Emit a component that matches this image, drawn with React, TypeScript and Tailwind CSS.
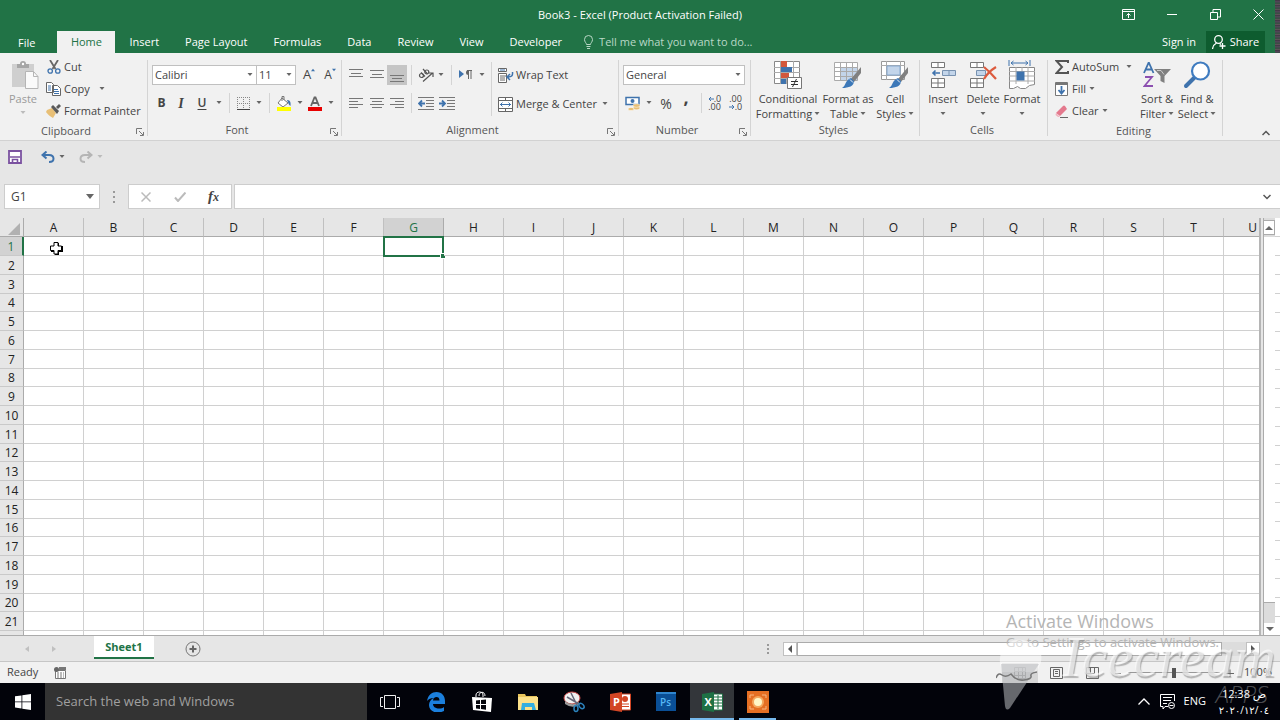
import type { ReactNode } from "react";

const COLUMNS = "ABCDEFGHIJKLMNOPQRSTU".split("");
const ROWS = Array.from({ length: 21 }, (_, i) => i + 1);
const TABS = ["Insert", "Page Layout", "Formulas", "Data", "Review", "View", "Developer"];

function Caret({ className = "text-[#666]" }: { className?: string }) {
  return (
    <svg viewBox="0 0 6 4" className={`h-1 w-1.5 shrink-0 ${className}`} aria-hidden="true">
      <path d="M.5 0h5L3 3z" fill="currentColor" />
    </svg>
  );
}

function Btn({ label, className, children }: { label: string; className: string; children: ReactNode }) {
  return (
    <button type="button" aria-label={label} className={`flex h-5 shrink-0 items-center justify-center ${className}`}>
      {children}
    </button>
  );
}

function Sep({ className = "h-5" }: { className?: string }) {
  return <span className={`w-px shrink-0 bg-[#d4d4d4] ${className}`} />;
}

function Group({ name, width, launcher, children }: { name: string; width: string; launcher?: boolean; children: ReactNode }) {
  return (
    <section aria-label={name} className={`relative flex shrink-0 flex-col ${width}`}>
      <div className="flex h-[66px]">{children}</div>
      <div className={`flex h-[21px] items-center justify-center text-[11px] text-[#555] ${launcher ? "pr-4" : "pr-1"}`}>{name}</div>
      {launcher && (
        <button type="button" aria-label={`${name} settings`} className="absolute right-1 bottom-1">
          <svg viewBox="0 0 8 8" className="h-2 w-2" fill="none" stroke="#777">
            <path d="M.5 6V.5H6M3 3l4 4M7.500 4v3.500H4" />
          </svg>
        </button>
      )}
      <span className="absolute top-1 right-0 bottom-1 w-px bg-[#d4d4d4]" />
    </section>
  );
}

function BigButton({ lines, caret, width, icon }: { lines: string[]; caret?: boolean; width: string; icon: ReactNode }) {
  return (
    <button type="button" className={`flex shrink-0 flex-col items-center pt-[3px] leading-[15px] ${width}`}>
      <span className="flex h-[32px] items-center">{icon}</span>
      <span className="whitespace-nowrap">{lines[0]}</span>
      <span className="flex h-[15px] items-center gap-0.5 whitespace-nowrap">
        {lines[1]}
        {caret && <Caret />}
      </span>
    </button>
  );
}

function SmallRow({ icon, text, children }: { icon: ReactNode; text: string; children?: ReactNode }) {
  return (
    <button type="button" className="flex h-[22px] items-center gap-[3px] whitespace-nowrap">
      <span className="flex w-[15px] justify-center">{icon}</span>
      {text}
      {children}
    </button>
  );
}

function Lines({ d }: { d: string }) {
  return (
    <svg viewBox="0 0 14 14" className="h-3.5 w-3.5" stroke="#777" fill="none">
      <path d={d} />
    </svg>
  );
}

function Combo({ label, value, width }: { label: string; value: string; width: string }) {
  return (
    <span className={`relative flex h-5 ${width}`}>
      <select aria-label={label} className="h-full w-full appearance-none border border-[#c0c0c0] bg-white pl-0.5 text-[11px] text-[#444] outline-none">
        <option>{value}</option>
      </select>
      <span className="pointer-events-none absolute top-2 right-1">
        <Caret />
      </span>
    </span>
  );
}

function Brush() {
  return (
    <>
      <path d="M27 6v6l-7 9-3-3z" fill="#808080" />
      <path d="M17 17l3 3c0 5-5 7-12 7 4-2 3-8 9-10z" fill="#3c78b8" />
      <path d="M16 18.500l3 3" stroke="#f1f1f1" />
    </>
  );
}

function Ribbon() {
  return (
    <div className="flex h-[88px] border-b border-[#d2d2d2] bg-[#f1f1f1] pt-[3px] text-[11px] text-[#444]">
      <Group name="Clipboard" width="w-[148px]" launcher>
        <button type="button" className="flex w-[46px] flex-col items-center pt-[3px] leading-[15px] text-[#9a9a9a]">
          <svg viewBox="0 0 28 30" className="ml-1 h-[32px] w-[28px]">
            <path d="M1 4h22v23H1z" fill="#cfcfcf" />
            <path d="M6 8V4h3a3 3 0 0 1 6 0h3v4z" fill="#a6a6a6" />
            <circle cx="12" cy="4" r="1.200" fill="#fff" />
            <path d="M14.500 11.500h8l4.500 5v12H14.500z" fill="#fafafa" stroke="#b5b5b5" />
            <path d="M22.500 11.500v5H27" fill="none" stroke="#b5b5b5" />
          </svg>
          Paste
          <span className="flex h-[14px] items-center">
            <Caret className="text-[#bbb]" />
          </span>
        </button>
        <div className="flex flex-col">
          <SmallRow
            text="Cut"
            icon={
              <svg viewBox="0 0 14 14" className="h-3.5 w-3.5" fill="none">
                <path d="M3 0l5.500 9M11 0L5.500 9" stroke="#666" strokeWidth="1.800" />
                <circle cx="3.200" cy="11" r="2.200" stroke="#3f73ad" strokeWidth="1.300" />
                <circle cx="10.800" cy="11" r="2.200" stroke="#3f73ad" strokeWidth="1.300" />
              </svg>
            }
          />
          <SmallRow
            text="Copy"
            icon={
              <svg viewBox="0 0 15 14" className="h-3.5 w-[15px]" fill="#fff" stroke="#666">
                <path d="M.5.5h5l2 2v8h-7zM6.500 3.500h5l3 3v7h-8z" />
                <path d="M2 4h3M2 6h3M2 8h3M8 7.500h4M8 9.500h5M8 11.500h5" stroke="#3f73ad" />
              </svg>
            }
          >
            <span className="pl-1.5">
              <Caret />
            </span>
          </SmallRow>
          <SmallRow
            text="Format Painter"
            icon={
              <svg viewBox="0 0 15 14" className="h-3.5 w-[15px]">
                <path d="M1 6l5-2 4 5-3 5C5 13 2 11 0 8z" fill="#e8bf76" />
                <path d="M5 3l2-2 6 6-2 3z" fill="#595959" />
                <path d="M10 3l3-3 2 2-3 3z" fill="#595959" />
              </svg>
            }
          />
        </div>
      </Group>

      <Group name="Font" width="w-[194px]" launcher>
        <div className="flex flex-col pt-[9px] pl-1">
          <div className="flex items-center">
            <Combo label="Font name" value="Calibri" width="w-[105px] -mr-px" />
            <Combo label="Font size" value="11" width="w-[40px]" />
            <Btn label="Increase font size" className="ml-0.5 w-[22px] text-[13px]">
              A
              <svg viewBox="0 0 6 4" className="mb-2.5 h-1 w-1"><path d="M0 4h6L3 0z" fill="#3f73ad" /></svg>
            </Btn>
            <Btn label="Decrease font size" className="w-5 text-[12px]">
              A
              <svg viewBox="0 0 6 4" className="mb-2.5 h-1 w-1"><path d="M0 0h6L3 4z" fill="#3f73ad" /></svg>
            </Btn>
          </div>
          <div className="flex items-center pt-2">
            <Btn label="Bold" className="w-[19px] text-[12px] font-bold">B</Btn>
            <Btn label="Italic" className="w-5 font-['Liberation_Serif',serif] text-[14px] font-bold italic">I</Btn>
            <Btn label="Underline" className="w-[22px] text-[12px] font-semibold underline underline-offset-2">U</Btn>
            <Btn label="Underline styles" className="w-3"><Caret /></Btn>
            <span className="w-1" />
            <Sep />
            <Btn label="Borders" className="ml-[3px] w-[20px]">
              <svg viewBox="0 0 13 13" className="h-[13px] w-[13px]" stroke="#888" fill="none">
                <path d="M.5 0v12M6.500 0v12M12.500 0v12M0 .5h13M0 6.500h13" strokeDasharray="1 1" />
                <path d="M0 12.500h13" stroke="#444" />
              </svg>
            </Btn>
            <Btn label="Border styles" className="w-3"><Caret /></Btn>
            <span className="w-1" />
            <Sep />
            <Btn label="Fill color" className="ml-1 w-5">
              <svg viewBox="0 0 16 15" className="h-[15px] w-4">
                <path d="M6 2l6 5-5 4-5-4z" fill="#fff" stroke="#777" />
                <path d="M6 5V.5h2V4" fill="none" stroke="#777" />
                <path d="M11 4c3 0 4 2 3.500 6-2-1-2-3-3.500-6z" fill="#3f73ad" />
                <path d="M1 11h14v4H1z" fill="#ffff00" />
              </svg>
            </Btn>
            <Btn label="Fill colors" className="w-[11px]"><Caret /></Btn>
            <Btn label="Font color" className="w-5">
              <svg viewBox="0 0 16 15" className="h-[15px] w-4">
                <path d="M4 10L7.500 1.500h1L12 10M5.500 7h5" fill="none" stroke="#666" strokeWidth="1.800" />
                <path d="M1 11h14v4H1z" fill="#e80000" />
              </svg>
            </Btn>
            <Btn label="Font colors" className="w-3"><Caret /></Btn>
          </div>
        </div>
      </Group>

      <Group name="Alignment" width="w-[277px]" launcher>
        <div className="flex flex-col gap-2 pt-[9px] pl-1">
          <div className="flex items-center">
            <Btn label="Top align" className="w-5"><Lines d="M0 1.500h14M2 5.500h10M0 8.500h14" /></Btn>
            <Btn label="Middle align" className="w-[21px]"><Lines d="M0 2.500h14M2 6.500h10M0 9.500h14" /></Btn>
            <Btn label="Bottom align" className="w-5 bg-[#c5c5c5]"><Lines d="M0 7.500h14M2 10.500h10M0 13.500h14" /></Btn>
            <span className="w-1" />
            <Sep />
            <Btn label="Orientation" className="ml-1 w-5">
              <svg viewBox="0 0 16 15" className="h-[15px] w-4" fill="none" stroke="#555" strokeWidth="1.200">
                <path d="M5 13.500L14.500 5M11 5h4v4" />
                <circle cx="3.500" cy="7.500" r="2" />
                <path d="M3 4.500l4 4M5 1l4.500 5" />
                <circle cx="8.800" cy="4" r="2" />
              </svg>
            </Btn>
            <Btn label="Orientation options" className="w-[9px]"><Caret /></Btn>
            <span className="w-1.5" />
            <Sep />
            <Btn label="Text direction" className="ml-1 w-5">
              <svg viewBox="0 0 14 10" className="h-2.5 w-3.5">
                <path d="M0 0l5 4-5 4z" fill="#3f73ad" />
                <path d="M12 0v9M9.500 0v9M13 .5H8" stroke="#666" fill="none" />
                <path d="M9.500 0a2.500 2.500 0 0 0 0 5z" fill="#666" />
              </svg>
            </Btn>
            <Btn label="Direction options" className="w-[11px]"><Caret /></Btn>
          </div>
          <div className="flex items-center">
            <Btn label="Align left" className="w-5"><Lines d="M0 2.500h14M0 5.500h9M0 8.500h14M0 11.500h9" /></Btn>
            <Btn label="Center" className="w-[21px]"><Lines d="M0 2.500h14M2 5.500h10M0 8.500h14M2 11.500h10" /></Btn>
            <Btn label="Align right" className="w-5"><Lines d="M0 2.500h14M5 5.500h9M0 8.500h14M5 11.500h9" /></Btn>
            <span className="w-1" />
            <Sep />
            <Btn label="Decrease indent" className="ml-1 w-5">
              <svg viewBox="0 0 16 13" className="h-[13px] w-4" stroke="#777" fill="none">
                <path d="M0 .5h16M8 3.500h8M8 6.500h8M8 9.500h8M0 12.500h16" />
                <path d="M7 6.500H1M4 3.500l-3 3 3 3" stroke="#3f73ad" strokeWidth="1.800" />
              </svg>
            </Btn>
            <Btn label="Increase indent" className="ml-px w-5">
              <svg viewBox="0 0 16 13" className="h-[13px] w-4" stroke="#777" fill="none">
                <path d="M0 .5h16M8 3.500h8M8 6.500h8M8 9.500h8M0 12.500h16" />
                <path d="M0 6.500h6M3 3.500l3 3-3 3" stroke="#3f73ad" strokeWidth="1.800" />
              </svg>
            </Btn>
          </div>
        </div>
        <div className="flex pt-1.5 pl-1">
          <Sep className="h-[54px]" />
          <div className="flex flex-col gap-[7px] pt-0.5 pl-1.5">
            <SmallRow
              text="Wrap Text"
              icon={
                <svg viewBox="0 0 16 15" className="h-[15px] w-4 shrink-0" fill="none" stroke="#666">
                  <path d="M.5.5h8v3h-8zM.5 5.500h8v9h-8z" fill="#fff" />
                  <path d="M2 2h5" stroke="#3f73ad" />
                  <path d="M2 8h7M2 10h5M2 12h5" />
                  <path d="M14.500 4c.5 4-1 5-5 5M12 6L9 9l3 3" stroke="#3f73ad" strokeWidth="1.500" />
                </svg>
              }
            />
            <SmallRow
              text="Merge & Center"
              icon={
                <svg viewBox="0 0 15 15" className="h-[15px] w-[15px]" fill="#fff" stroke="#666">
                  <path d="M.5.5h14v14H.5zM.5 3.500h14M.5 11.500h14M7.500.5v3M7.500 11.500v3" />
                  <path d="M2 7.500h11M4.500 5.500l-2 2 2 2M10.500 5.500l2 2-2 2" fill="none" stroke="#3f73ad" />
                </svg>
              }
            >
              <span className="pl-0.5"><Caret /></span>
            </SmallRow>
          </div>
        </div>
      </Group>

      <Group name="Number" width="w-[132px]" launcher>
        <div className="flex flex-col gap-2 pt-[9px] pl-1">
          <Combo label="Number format" value="General" width="w-[122px]" />
          <div className="flex items-center">
            <Btn label="Accounting format" className="w-5">
              <svg viewBox="0 0 16 15" className="h-[15px] w-4">
                <path d="M1 1.500h13v7H1z" fill="#fff" stroke="#3f73ad" strokeWidth="1.500" />
                <circle cx="7.500" cy="5" r="2" fill="#3f73ad" />
                <g fill="#e8bf76" stroke="#fff" strokeWidth=".5">
                  <ellipse cx="11.500" cy="12" rx="3.500" ry="1.800" />
                  <ellipse cx="11.500" cy="9.500" rx="3.500" ry="1.800" />
                  <ellipse cx="6" cy="13" rx="3" ry="1.600" />
                </g>
              </svg>
            </Btn>
            <Btn label="Accounting options" className="w-3"><Caret /></Btn>
            <Btn label="Percent style" className="w-[22px] text-[14px]">%</Btn>
            <Btn label="Comma style" className="w-[18px] pb-3 text-[18px] font-bold">,</Btn>
            <span className="w-1.5" />
            <Sep />
            <Btn label="Increase decimal" className="ml-0.5 w-[21px] flex-col text-[9px] leading-[8px]">
              <span className="flex items-center"><svg viewBox="0 0 6 6" className="h-1.5 w-1.5" fill="none" stroke="#3f73ad"><path d="M6 3H1M3 1L1 3l2 2" /></svg>.0</span>
              <span>.00</span>
            </Btn>
            <Btn label="Decrease decimal" className="w-[21px] flex-col text-[9px] leading-[8px]">
              <span>.00</span>
              <span className="flex items-center"><svg viewBox="0 0 6 6" className="h-1.5 w-1.5" fill="none" stroke="#3f73ad"><path d="M0 3h5M3 1l2 2-2 2" /></svg>.0</span>
            </Btn>
          </div>
        </div>
      </Group>

      <Group name="Styles" width="w-[169px]">
        <div className="flex pl-1.5">
          <BigButton
            lines={["Conditional", "Formatting"]}
            caret
            width="w-[62px]"
            icon={
              <svg viewBox="0 0 30 30" className="h-[30px] w-[30px]">
                <path d="M1.500 1.500h25v22h-25z" fill="#fff" stroke="#888" />
                <path d="M7.500 1v23M13.500 1v23M20.500 1v23M1 7.500h26M1 12.500h26M1 18.500h26" stroke="#aaa" />
                <path d="M8 1h6v6H8zM8 13h8v5H8z" fill="#d2583c" />
                <path d="M8 7h11v5H8zM8 19h5v5H8z" fill="#3f73ad" />
                <path d="M14.500 17.500h14v11h-14z" fill="#fff" stroke="#777" />
                <path d="M18 21.500h7M18 24.500h7M23.500 19l-4 8" stroke="#333" />
              </svg>
            }
          />
          <BigButton
            lines={["Format as", "Table"]}
            caret
            width="w-[58px]"
            icon={
              <svg viewBox="0 0 28 28" className="h-7 w-7">
                <path d="M.5 1.500h23v18H.5z" fill="#fff" />
                <path d="M7 6h16v14H7z" fill="#c3d5ea" />
                <path d="M.5 1.500h23v18H.5zM6.500 1v19M12.500 1v19M18.500 1v19M0 6.500h24M0 10.500h24M0 15.500h24" fill="none" stroke="#aaa" />
                <Brush />
              </svg>
            }
          />
          <BigButton
            lines={["Cell", "Styles"]}
            caret
            width="w-[36px]"
            icon={
              <svg viewBox="0 0 28 28" className="h-7 w-7">
                <path d="M.5.5h23v18H.5z" fill="#fff" stroke="#999" />
                <path d="M5.500 0v19M19.500 0v19M0 4.500h24M0 14.500h24" stroke="#aaa" />
                <path d="M6 5h13v9H6z" fill="#c3d5ea" stroke="#87a9cf" />
                <Brush />
              </svg>
            }
          />
        </div>
      </Group>

      <Group name="Cells" width="w-[128px]">
        <div className="flex pl-[3px]">
          <BigButton
            lines={["Insert", ""]}
            caret
            width="w-10"
            icon={
              <svg viewBox="0 0 26 28" className="h-7 w-[26px]" fill="#fff" stroke="#777">
                <path d="M1.500 1.500h13v5h-13zM8 1.500v5M1.500 17.500h13v9h-13zM8 17.500v9M1.500 22h13" />
                <path d="M12.500 9.500h13v5h-13zM19 9.500v5" fill="#c3d5ea" stroke="#7892b0" />
                <path d="M10 12H3M5.500 9.500L3 12l2.500 2.500" fill="none" stroke="#3f73ad" strokeWidth="1.600" />
              </svg>
            }
          />
          <BigButton
            lines={["Delete", ""]}
            caret
            width="w-10"
            icon={
              <svg viewBox="0 0 28 28" className="h-7 w-7" fill="#fff" stroke="#777">
                <path d="M1.500 1.500h13v5h-13zM8 1.500v5M1.500 17.500h13v9h-13zM8 17.500v9M1.500 22h13" />
                <path d="M7.500 9.500h9v5h-9z" fill="#c3d5ea" stroke="#7892b0" />
                <path d="M15 6q6 5 12 12M27 6q-8 5-12 12" fill="none" stroke="#dc5b3e" strokeWidth="2.200" />
              </svg>
            }
          />
          <BigButton
            lines={["Format", ""]}
            caret
            width="w-[38px]"
            icon={
              <svg viewBox="0 0 28 30" className="h-[30px] w-7" fill="none" stroke="#888">
                <path d="M1.500 7.500h25v17l-5 1-4 3h-5l-3-2-4 2h-4z" fill="#fff" />
                <path d="M8 7v17M20 7v17M14 7v4M1 11.500h26M1 16h26M1 21h26" stroke="#aaa" />
                <path d="M8.500 11.500h8v9h-8z" fill="#3f73ad" stroke="none" />
                <path d="M1 0v6M22 0v6M3 3h17M5.500 1L3 3l2.500 2M17.500 1L20 3l-2.500 2" stroke="#3f73ad" />
              </svg>
            }
          />
        </div>
      </Group>

      <Group name="Editing" width="w-[175px]">
        <div className="flex w-[89px] flex-col pl-1.5">
          <SmallRow
            text="AutoSum"
            icon={
              <svg viewBox="0 0 14 14" className="h-3.5 w-3.5" fill="none" stroke="#555" strokeWidth="2">
                <path d="M13 3V1H1.500L7 7l-5.500 6H13v-2" />
              </svg>
            }
          >
            <span className="pl-1"><Caret /></span>
          </SmallRow>
          <SmallRow
            text="Fill"
            icon={
              <svg viewBox="0 0 13 14" className="h-3.5 w-[13px]" fill="#fff" stroke="#777">
                <path d="M.5.5h12v13H.5z" />
                <path d="M1 1h11v2H1z" fill="#777" stroke="none" />
                <path d="M6.500 4v7M3.500 8l3 3.500 3-3.500" fill="none" stroke="#3f73ad" strokeWidth="1.800" />
              </svg>
            }
          >
            <Caret />
          </SmallRow>
          <SmallRow
            text="Clear"
            icon={
              <svg viewBox="0 0 14 13" className="h-[13px] w-3.5">
                <path d="M1 8l7-7q1-1 2 0l2 3-7 7z" fill="#e4798d" />
                <path d="M1 8l4 4H3L.5 10z" fill="#f0b2bd" />
                <path d="M5 12.500h8" stroke="#666" />
              </svg>
            }
          >
            <Caret />
          </SmallRow>
        </div>
        <BigButton
          lines={["Sort &", "Filter"]}
          caret
          width="w-10"
          icon={
            <svg viewBox="0 0 28 28" className="h-7 w-7" fill="none">
              <path d="M1 12L5.500 2h.5L10.500 12M3 8.500h6" stroke="#3f73ad" strokeWidth="1.800" />
              <path d="M2 16h7l-7.500 9H10" stroke="#8c4fb0" strokeWidth="1.800" />
              <path d="M11 8h17l-6.500 7v7l-4-2v-5z" fill="#808080" />
              <path d="M14 9.500h4l3 4" stroke="#ccc" />
            </svg>
          }
        />
        <BigButton
          lines={["Find &", "Select"]}
          caret
          width="w-10"
          icon={
            <svg viewBox="0 0 28 28" className="h-7 w-7" fill="none">
              <path d="M3 25L12 16" stroke="#3f73ad" strokeWidth="4" strokeLinecap="round" />
              <circle cx="17.500" cy="10" r="8.500" fill="#fff" stroke="#3f7cc0" strokeWidth="2.200" />
            </svg>
          }
        />
      </Group>
      <div className="flex flex-1 items-end justify-end pr-2.5 pb-1">
        <button type="button" aria-label="Collapse the ribbon">
          <svg viewBox="0 0 8 6" className="h-1.5 w-2" fill="none" stroke="#555" strokeWidth="1.500"><path d="M.5 5L4 1.500 7.500 5" /></svg>
        </button>
      </div>
    </div>
  );
}

function TitleBar() {
  return (
    <header className="bg-[#217346] text-white">
      <div className="relative flex h-[31px] items-center justify-end pr-4">
        <h1 className="absolute inset-x-0 text-center text-[11px]">Book3 - Excel (Product Activation Failed)</h1>
        <div className="relative flex items-center gap-8 pb-0.5">
          <button type="button" aria-label="Ribbon display options">
            <svg viewBox="0 0 13 11" className="h-[11px] w-[13px]" fill="none" stroke="currentColor"><path d="M.5.5h12v10H.5zM.5 2.500h12M6.500 9V4.500M4.500 6.500l2-2 2 2" /></svg>
          </button>
          <button type="button" aria-label="Minimize">
            <svg viewBox="0 0 11 11" className="h-[11px] w-[11px]" stroke="currentColor"><path d="M0 5.500h10" /></svg>
          </button>
          <button type="button" aria-label="Restore">
            <svg viewBox="0 0 11 11" className="h-[11px] w-[11px]" fill="none" stroke="currentColor"><path d="M.5 3.500h7v7h-7zM3 3V.5h7.500V8H8" /></svg>
          </button>
          <button type="button" aria-label="Close">
            <svg viewBox="0 0 11 11" className="h-[11px] w-[11px]" stroke="currentColor"><path d="M.5.5l10 10M10.500.5l-10 10" /></svg>
          </button>
        </div>
      </div>
      <nav className="flex h-[22px] items-center text-[11px]">
        <a href="#file" className="pt-0.5 pr-[22px] pl-[18px]">File</a>
        <a href="#home" className="flex h-full w-[58px] items-center justify-center bg-[#f1f1f1] text-[#217346]">Home</a>
        <div className="flex gap-[26px] pl-3.5">
          {TABS.map((tab) => (
            <a key={tab} href={`#${tab}`} className="whitespace-nowrap">{tab}</a>
          ))}
        </div>
        <button type="button" className="flex items-center gap-1.5 pl-[22px] text-[#b9d8c6]">
          <svg viewBox="0 0 9 14" className="h-3.5 w-[9px]" fill="none" stroke="currentColor"><path d="M2.500 9.500C2.500 8 .5 7 .5 4.500a4 4 0 0 1 8 0c0 2.500-2 3.500-2 5zM2.500 11.500h4M3 13.500h3" /></svg>
          Tell me what you want to do...
        </button>
        <div className="ml-auto flex h-full items-center gap-2.5 pr-[15px]">
          <a href="#signin">Sign in</a>
          <button type="button" className="flex h-full w-[59px] items-center justify-center gap-1 bg-[#0e5c2f]">
            <svg viewBox="0 0 14 14" className="h-3.5 w-3.5" fill="none" stroke="currentColor" strokeWidth="1.300"><circle cx="6.500" cy="4.500" r="3.800" /><path d="M.5 14c.5-3 2-5 4-6M7.500 8.500l1.500 1M10.500 8v6M7.500 11h6" /></svg>
            Share
          </button>
        </div>
      </nav>
    </header>
  );
}

function FormulaArea() {
  return (
    <div className="text-[#444]">
      <div className="flex h-[32px] items-center pl-2">
        <button type="button" aria-label="Save">
          <svg viewBox="0 0 14 14" className="h-3.5 w-3.5"><path d="M1 1h12v12H1z" fill="#fff" stroke="#7b52a0" strokeWidth="1.800" /><path d="M2 7h10M4.500 13V9.500h5V13" fill="none" stroke="#7b52a0" strokeWidth="1.600" /></svg>
        </button>
        <button type="button" aria-label="Undo" className="ml-[19px] flex items-center gap-1">
          <svg viewBox="0 0 14 12" className="h-3 w-3.5" fill="none" stroke="#3f73ad" strokeWidth="2"><path d="M5.500.5L1.500 4l4 3.500M2 4h6c3 0 4.500 1.500 4.500 3.800S11 11 8 11" /></svg>
          <Caret />
        </button>
        <button type="button" aria-label="Redo" className="ml-[14px] flex items-center gap-1">
          <svg viewBox="0 0 14 12" className="h-3 w-3.5" fill="none" stroke="#b5b5b5" strokeWidth="2"><path d="M8.500.5l4 3.500-4 3.500M12 4H6C3 4 1.500 5.500 1.500 7.800S3 11 6 11" /></svg>
          <Caret className="text-[#bbb]" />
        </button>
      </div>
      <div className="flex items-center pt-[11px] pb-[9px]">
        <div className="relative ml-1 flex h-[25px] w-24">
          <input aria-label="Name box" defaultValue="G1" className="w-full border border-[#cdcdcd] bg-white pl-1.5 text-[12px] outline-none" />
          <span className="absolute top-2.5 right-1.5"><svg viewBox="0 0 8 5" className="h-[5px] w-2"><path d="M0 0h8L4 5z" fill="#666" /></svg></span>
        </div>
        <svg viewBox="0 0 2 12" className="mx-[13px] h-3 w-0.5" fill="#999"><path d="M0 0h2v2H0zM0 5h2v2H0zM0 10h2v2H0z" /></svg>
        <div className="flex h-[25px] w-[104px] items-center justify-between border border-[#cdcdcd] bg-white pr-3 pl-3">
          <button type="button" aria-label="Cancel"><svg viewBox="0 0 10 10" className="h-2.5 w-2.5" stroke="#bbb" strokeWidth="1.500"><path d="M.5.5l9 9M9.500.5l-9 9" /></svg></button>
          <button type="button" aria-label="Enter"><svg viewBox="0 0 12 10" className="h-2.5 w-3" fill="none" stroke="#bbb" strokeWidth="2"><path d="M1 5.500L4 9l7.500-8.500" /></svg></button>
          <button type="button" aria-label="Insert function" className="font-['Liberation_Serif',serif] text-[15px] leading-none font-bold italic">f<span className="text-[12px]">x</span></button>
        </div>
        <div className="relative ml-[2px] flex h-[25px] flex-1">
          <input aria-label="Formula bar" className="w-full border border-r-0 border-[#cdcdcd] bg-white outline-none" />
          <svg viewBox="0 0 8 6" className="absolute top-2.5 right-[9px] h-1.5 w-2" fill="none" stroke="#555" strokeWidth="1.500"><path d="M.5 1L4 4.500 7.500 1" /></svg>
        </div>
      </div>
    </div>
  );
}

function CellContent({ id }: { id: string }) {
  if (id === "G1") {
    return (
      <span className="absolute -inset-x-px -top-px -bottom-0.5 border-2 border-[#217346]">
        <span className="absolute -right-1 -bottom-1 h-[6px] w-[6px] border border-white bg-[#217346]" />
      </span>
    );
  }
  if (id === "A1") {
    return (
      <svg viewBox="0 0 15 15" className="absolute top-1 left-[25px] h-[15px] w-[15px]" aria-hidden="true">
        <path d="M5 2h5v3h4v6h-4v3H6v-3H2V5h3z" fill="#000" />
        <path d="M5 1.500h4v3.500h3.500v4.500H9V13H5V9.500H1.500V5H5z" fill="#fff" stroke="#000" />
      </svg>
    );
  }
  return null;
}

function Sheet() {
  return (
    <div className="flex flex-1">
      <div className="min-w-0 flex-1 overflow-hidden border-r-2 border-[#b5b5b5]">
        <table className="w-full table-fixed border-separate border-spacing-0 text-[12px] text-[#222]">
          <thead>
            <tr className="h-[19px]">
              <th className="w-6 border-r border-b border-[#ababab] p-0">
                <svg viewBox="0 0 12 12" className="mt-1 ml-2 h-3 w-3"><path d="M12 0v12H0z" fill="#b1b1b1" /></svg>
              </th>
              {COLUMNS.map((c) => (
                <th
                  key={c}
                  scope="col"
                  className={`border-b p-0 pt-px leading-[17px] font-normal ${c === "U" ? "border-[#ababab] pr-0.5 text-right" : "w-[60px] border-r"} ${c === "G" ? "border-r-[#ababab] border-b-[#217346] bg-[#d2d2d2] text-[#217346]" : "border-r-[#c0c0c0] border-b-[#ababab]"}`}
                >
                  {c}
                </th>
              ))}
            </tr>
          </thead>
          <tbody>
            {ROWS.map((r) => (
              <tr key={r} className={r % 4 === 0 ? "h-[18px]" : "h-[19px]"}>
                <th
                  scope="row"
                  className={`border-b border-b-[#c9c9c9] p-0 leading-[17px] font-normal ${r === 1 ? "border-r-2 border-r-[#217346] bg-[#d2d2d2] text-[#217346]" : "border-r border-r-[#ababab]"}`}
                >
                  {r}
                </th>
                {COLUMNS.map((c) => (
                  <td key={c} className={`border-b border-[#d0d0d0] bg-white p-0 ${c === "U" ? "" : "border-r"} ${r === 1 ? "relative" : ""}`}>
                    <CellContent id={`${c}${r}`} />
                  </td>
                ))}
              </tr>
            ))}
            <tr className="h-1">
              <th className="border-r border-[#ababab] p-0" aria-label="Next row" />
              {COLUMNS.map((c) => (
                <td key={c} className={`border-[#d0d0d0] bg-white p-0 ${c === "U" ? "" : "border-r"}`} />
              ))}
            </tr>
          </tbody>
        </table>
      </div>
      <div className="ml-0.5 flex w-3 flex-col border-l border-[#ababab] bg-[#dcdcdc] pt-0.5">
        <button type="button" aria-label="Scroll up" className="flex h-[15px] items-center justify-center border border-l-0 border-[#ababab] bg-white">
          <svg viewBox="0 0 8 4" className="h-1 w-2"><path d="M0 4h8L4 0z" fill="#666" /></svg>
        </button>
        <div className="mt-0.5 mb-[20px] flex-1 border-b border-[#ababab] bg-white" />
        <button type="button" aria-label="Scroll down" className="flex h-3 items-center justify-center bg-white">
          <svg viewBox="0 0 8 4" className="h-1 w-2"><path d="M0 0h8L4 4z" fill="#666" /></svg>
        </button>
      </div>
      <div className="w-[5px] bg-[repeating-linear-gradient(#fff_0px,#fff_18px,#d0d0d0_18px,#d0d0d0_19px)]" />
    </div>
  );
}

function SheetTabs() {
  return (
    <div className="flex h-[26px] items-stretch border-t border-[#ababab]">
      <div className="flex w-[94px] items-center gap-[22px] pl-[25px]">
        <button type="button" aria-label="Previous sheet"><svg viewBox="0 0 5 8" className="h-2 w-[5px]"><path d="M4 1v6L0 4z" fill="#c0c0c0" /></svg></button>
        <button type="button" aria-label="Next sheet"><svg viewBox="0 0 5 8" className="h-2 w-[5px]"><path d="M0 1v6l4-3z" fill="#c0c0c0" /></svg></button>
      </div>
      <button type="button" className="mb-0.5 flex w-[60px] items-center justify-center border-b-2 border-[#217346] bg-white pt-0.5 text-[11px] font-bold text-[#217346]">Sheet1</button>
      <button type="button" aria-label="New sheet" className="ml-[31px]">
        <svg viewBox="0 0 16 16" className="h-4 w-4" fill="none" stroke="#777"><circle cx="8" cy="8" r="7" /><path d="M8 4.500v7M4.500 8h7" stroke="#666" strokeWidth="2" /></svg>
      </button>
      <div className="ml-auto flex w-[513px] items-center">
        <svg viewBox="0 0 2 10" className="h-2.5 w-0.5" fill="#999"><path d="M0 0h2v2H0zM0 4h2v2H0zM0 8h2v2H0z" /></svg>
        <div className="mr-5 ml-[14px] flex h-[14px] flex-1 bg-[#dcdcdc]">
          <button type="button" aria-label="Scroll left" className="flex w-3.5 items-center justify-center border border-[#c0c0c0] bg-white"><svg viewBox="0 0 4 8" className="h-2 w-1"><path d="M4 0v8L0 4z" fill="#555" /></svg></button>
          <div className="mr-6 flex-1 border border-[#ababab] bg-white" />
          <button type="button" aria-label="Scroll right" className="flex w-3.5 items-center justify-center border border-[#c0c0c0] bg-white"><svg viewBox="0 0 4 8" className="h-2 w-1"><path d="M0 0v8l4-4z" fill="#555" /></svg></button>
        </div>
      </div>
    </div>
  );
}

function StatusBar() {
  return (
    <footer className="flex h-[22px] items-center border-t border-[#c6c6c6] bg-[#f1f1f1] pl-[7px] text-[11px] text-[#444]">
      <span>Ready</span>
      <button type="button" aria-label="Record macro" className="ml-4">
        <svg viewBox="0 0 12 12" className="h-3 w-3"><path d="M1.500 3.500h10v8h-10z" fill="#fff" stroke="#777" /><path d="M5 0h7v3H5z" fill="#777" /><circle cx="2.500" cy="2.500" r="2.500" fill="#666" /><path d="M3 6h7M3 8h7M3 10h7" stroke="#777" strokeDasharray="2 1" /></svg>
      </button>
      <div className="ml-auto flex items-center pr-2">
        <button type="button" aria-label="Normal view" className="flex h-5 w-9 items-center justify-center bg-[#d6d6d6]"><svg viewBox="0 0 12 12" className="h-3 w-3" fill="none" stroke="#999"><path d="M.5.5h11v11H.5zM4.500 0v12M8.500 0v12M0 4.500h12M0 8.500h12" /></svg></button>
        <button type="button" aria-label="Page layout view" className="flex w-9 justify-center"><svg viewBox="0 0 13 12" className="h-3 w-[13px]" fill="none" stroke="#666"><path d="M.5.5h12v11H.5zM3.500 2.500h6v7h-6zM5 4.500h3M5 6.500h3" /></svg></button>
        <button type="button" aria-label="Page break preview" className="flex w-9 justify-center"><svg viewBox="0 0 13 12" className="h-3 w-[13px]" fill="none" stroke="#666"><path d="M.5.5h12v11H.5zM4.500 0v6M8.500 0v6M.5 6.500h8" /></svg></button>
        <button type="button" aria-label="Zoom out" className="ml-0.5 flex w-3 justify-center"><svg viewBox="0 0 8 8" className="h-2 w-2" stroke="#666"><path d="M1 4.500h6" /></svg></button>
        <input type="range" aria-label="Zoom" className="mx-1 h-px w-[92px] appearance-none bg-[#999] [&::-webkit-slider-thumb]:h-2.5 [&::-webkit-slider-thumb]:w-1 [&::-webkit-slider-thumb]:appearance-none [&::-webkit-slider-thumb]:bg-[#555]" />
        <button type="button" aria-label="Zoom in" className="flex w-3 justify-center"><svg viewBox="0 0 8 8" className="h-2 w-2" stroke="#666"><path d="M0 4.500h8M4 .5v8" /></svg></button>
        <span className="ml-2">100%</span>
      </div>
    </footer>
  );
}

function TaskIcon({ label, children }: { label: string; children: ReactNode }) {
  return (
    <button type="button" aria-label={label} className="flex w-[46px] items-center justify-center">
      {children}
    </button>
  );
}

function Taskbar() {
  return (
    <div className="flex h-[37px] bg-[#02030a] text-white">
      <button type="button" aria-label="Start" className="flex w-[45px] items-center justify-center">
        <svg viewBox="0 0 16 16" className="h-4 w-4" fill="#fff"><path d="M0 2.300l6.500-.9v6.100H0zM7.300 1.300L16 0v7.500H7.300zM0 8.300h6.500v6.200L0 13.600zM7.300 8.300H16V16l-8.700-1.300z" /></svg>
      </button>
      <input aria-label="Search" placeholder="Search the web and Windows" className="w-[322px] bg-[#333] pl-[11px] text-[13px] outline-none placeholder:text-[#a0a0a0]" />
      <div className="flex">
        <TaskIcon label="Task view">
          <svg viewBox="0 0 20 14" className="h-3.5 w-5" fill="none" stroke="#eee"><path d="M4.500.5h11v13h-11zM3 2.500H.5v9H3M17 2.500h2.500v9H17" /></svg>
        </TaskIcon>
        <TaskIcon label="Edge">
          <svg viewBox="0 0 20 20" className="h-5 w-5"><path d="M1 9C2 3 6 0 10.500 0 16 0 19 4 19 9v3H7c0 3 3 4.500 6 4.500 2 0 4-.5 5-1.500v4c-2 1-4 1.500-6.500 1.500C6 20.500 3 17 3 13c0-3 2-6 5-7-4 0-6 1.500-7 3zm6-.5h6.500C13.500 6 12.300 5 10.500 5 8.500 5 7.300 6.500 7 8.500z" fill="#1b7fdc" /></svg>
        </TaskIcon>
        <TaskIcon label="Store">
          <svg viewBox="0 0 20 22" className="h-[22px] w-5"><path d="M4 6V4c0-4 7-4 7 0v2M7 5c0-5 6-5 6 0" fill="none" stroke="#fff" /><path d="M0 6l20 1-1 14-18-2z" fill="#fff" /><path d="M4 9.500l4-.5v4H4zM9 9l5-.5V13H9zM4 14h4v4l-4-.5zM9 14h5v4.800L9 18z" fill="#05060c" /></svg>
        </TaskIcon>
        <TaskIcon label="File Explorer">
          <svg viewBox="0 0 20 18" className="h-[18px] w-5"><path d="M0 1h7l1 2h11v4H0z" fill="#e8c45c" /><path d="M0 4h20v13H0z" fill="#fbe08a" /><path d="M4 10h12l2 7h-4v-3H7v3H3z" fill="#33aee0" /></svg>
        </TaskIcon>
        <TaskIcon label="Snipping Tool">
          <svg viewBox="0 0 22 22" className="h-[22px] w-[22px]" fill="none"><ellipse cx="9" cy="7" rx="8" ry="6" fill="#f1f1f1" stroke="#c94a4a" /><path d="M2 10q6 6 14 1v3q-7 4-14-1z" fill="#999" /><path d="M8 2l6 12M4 6l12 7" stroke="#667" strokeWidth="1.500" /><ellipse cx="13" cy="17.500" rx="2" ry="3" stroke="#2c83bd" strokeWidth="1.500" /><ellipse cx="18.500" cy="15" rx="2" ry="3" transform="rotate(-45 18.500 15)" stroke="#2c83bd" strokeWidth="1.500" /></svg>
        </TaskIcon>
        <TaskIcon label="PowerPoint">
          <svg viewBox="0 0 21 20" className="h-5 w-[21px]"><path d="M11 2h9.500v16H11z" fill="#fff" stroke="#d24625" /><circle cx="15" cy="7" r="3" fill="#d24625" /><path d="M12 12h7M12 14.500h7" stroke="#d24625" /><path d="M0 2l12-2v20L0 18z" fill="#d24625" /><text x="3" y="14" fontSize="11" fontWeight="700" fill="#fff">P</text></svg>
        </TaskIcon>
        <TaskIcon label="Photoshop">
          <svg viewBox="0 0 20 20" className="h-5 w-5"><path d="M0 0h20v19H0z" fill="#0a4f96" /><path d="M0 0h20v2H0z" fill="#2f86cf" /><text x="4" y="13.500" fontSize="10" fontWeight="600" fill="#57b8f5">Ps</text></svg>
        </TaskIcon>
        <button type="button" aria-label="Excel" className="ml-px flex w-[44px] items-center justify-center border-b-2 border-[#76b9ed] bg-[#33363a] pt-0.5">
          <svg viewBox="0 0 21 20" className="h-5 w-[21px]"><path d="M11 2h9.500v16H11z" fill="#fff" stroke="#1e7145" /><path d="M12 5h8M12 8h8M12 11h8M12 14h8M16 3v14" stroke="#1e7145" /><path d="M0 2l12-2v20L0 18z" fill="#1e7145" /><text x="2.500" y="14" fontSize="11" fontWeight="700" fill="#fff">X</text></svg>
        </button>
        <button type="button" aria-label="Screen Recorder" className="mx-[5px] flex w-[37px] items-center justify-center border-b-2 border-[#76b9ed] pt-0.5">
          <svg viewBox="0 0 22 22" className="h-[22px] w-[22px]"><path d="M0 0h22v22H0z" fill="#e56f23" /><circle cx="11" cy="11" r="6" fill="#f4a75e" /><circle cx="11" cy="11" r="4" fill="#fff7c8" /><path d="M3 7V4h4M15 4h4v3M3 15v3h4M15 18h4v-3" fill="none" stroke="#f7b783" /></svg>
        </button>
      </div>
      <div className="ml-auto flex items-center pr-2.5">
        <button type="button" aria-label="Show hidden icons"><svg viewBox="0 0 12 7" className="h-[7px] w-3" fill="none" stroke="#fff" strokeWidth="1.300"><path d="M.5 6.500L6 1l5.500 5.500" /></svg></button>
        <button type="button" aria-label="Notifications" className="ml-2.5"><svg viewBox="0 0 16 16" className="h-4 w-4" fill="none" stroke="#fff"><path d="M8 12.500H5L3 15v-2.500H.5V.5h14V7M3 3.500h9M3 6.500h8M3 9.500h4" /><circle cx="11.500" cy="11.500" r="3" /><path d="M9.500 11.500h4" /></svg></button>
        <span className="ml-2 text-[11px]">ENG</span>
        <time className="ml-3 flex w-[52px] flex-col items-center font-['Open_Sans','DejaVu_Sans',sans-serif] text-[11px] leading-4 whitespace-nowrap">
          <span>12:38 <bdi>ص</bdi></span>
          <span className="text-[10px]">٢٠٢٠/١٢/٠٤</span>
        </time>
      </div>
    </div>
  );
}

function Watermarks() {
  return (
    <div className="pointer-events-none absolute right-0 bottom-0 h-[112px] w-[280px]">
      <div className="absolute top-0.5 left-1.5 text-[#b5b5b5]">
        <p className="text-[18px] leading-[22px] whitespace-nowrap">Activate Windows</p>
        <p className="text-[13px] leading-5 whitespace-nowrap">Go to Settings to activate Windows.</p>
      </div>
      <svg viewBox="0 0 50 92" className="absolute top-[18px] left-[-4px] h-[92px] w-[50px]">
        <path d="M4 38C2 18 18 12 26 14s22 6 19 22l-4 10H6z" fill="#fff" opacity=".5" />
        <path d="M5 38h38L14 82q-4 4-5-2z" fill="#b9bcc0" opacity=".55" />
        <path d="M0 52q2-6 6-3t9-1q5 7 13 6t7-4 6-4" fill="none" stroke="#777" strokeWidth="1.500" />
      </svg>
      <p className="absolute top-[20px] right-1 font-['Liberation_Serif',serif] text-[58px] leading-[58px] text-white/60 italic [text-shadow:1px_2px_1px_#8889]">Icecream</p>
      <p className="absolute right-3 bottom-3.5 text-[24px] leading-none font-light text-white/30 italic">APPS</p>
    </div>
  );
}

export default function App() {
  return (
    <div className="relative flex min-h-screen flex-col overflow-hidden bg-[#e6e6e6] font-['Open_Sans','Noto_Sans',sans-serif]">
      <TitleBar />
      <Ribbon />
      <FormulaArea />
      <Sheet />
      <SheetTabs />
      <StatusBar />
      <Taskbar />
      <Watermarks />
      <div className="absolute top-0 right-0 h-[53px] w-[5px] bg-[repeating-linear-gradient(#3b3340_0px,#5a4a5e_2px,#2d4a3c_3px,#6b5560_5px)]" />
    </div>
  );
}
